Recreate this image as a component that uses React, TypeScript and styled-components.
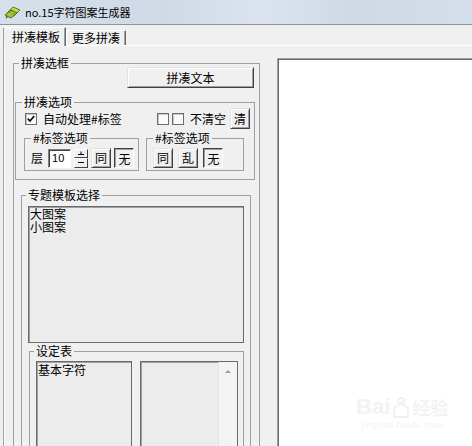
import React from "react";
import styled, { createGlobalStyle } from "styled-components";

const GlobalStyle = createGlobalStyle`
  html, body {
    margin: 0;
    padding: 0;
    background: #f0f0f0;
  }
  body {
    font-family: "Noto Sans CJK SC", "Liberation Sans", sans-serif;
    font-size: 12px;
    color: #000;
  }
`;

const Window = styled.div`
  width: 472px;
  height: 446px;
  overflow: hidden;
  display: flex;
  flex-direction: column;
  background: #f0f0f0;
`;

const TitleBar = styled.div`
  height: 24px;
  flex-shrink: 0;
  display: flex;
  align-items: center;
  gap: 4px;
  padding-left: 4px;
  background: linear-gradient(
    to right,
    #d6e0eb 0%,
    #cfdae6 35%,
    #dbe4ee 55%,
    #cfd9e5 75%,
    #d5dfea 100%
  );
  border-bottom: 1px solid #8d949c;
`;

const Title = styled.span`
  font-size: 11px;
  line-height: 14px;
  color: #000;
`;

const TabStrip = styled.div`
  height: 20px;
  flex-shrink: 0;
  display: flex;
  align-items: flex-end;
  padding-left: 3px;
`;

const Tab = styled.div<{ $active?: boolean }>`
  box-sizing: border-box;
  position: relative;
  z-index: 1;
  display: flex;
  align-items: center;
  font-size: 12px;
  line-height: 12px;
  background: #f0f0f0;
  border-top: 1px solid #fff;
  border-left: 1px solid ${(p) => (p.$active ? "#a0a0a0" : "#fff")};
  border-right: 1px solid #696969;
  box-shadow: inset -1px 0 0 #a0a0a0;
  height: ${(p) => (p.$active ? 19 : 15)}px;
  padding: ${(p) => (p.$active ? "0 5px 1px 8px" : "0 5px 0 5px")};
  margin-bottom: ${(p) => (p.$active ? -1 : 0)}px;
`;

const TabPage = styled.div`
  flex: 1;
  display: flex;
  margin-left: 3px;
  border-top: 1px solid #fff;
  border-left: 1px solid #a0a0a0;
  box-shadow: inset 1px 0 0 #fff;
  min-height: 0;
`;

const LeftPanel = styled.div`
  width: 256px;
  flex-shrink: 0;
  box-sizing: border-box;
  padding: 11px 0 0 9px;
`;

const Group = styled.fieldset<{ $pad: string; $m?: string; $w?: number; $h?: number }>`
  box-sizing: border-box;
  margin: ${(p) => p.$m ?? "0"};
  padding: ${(p) => p.$pad};
  border: 1px solid #a0a0a0;
  min-width: 0;
  ${(p) => (p.$w ? `width: ${p.$w}px; flex-shrink: 0;` : "")}
  ${(p) => (p.$h ? `height: ${p.$h}px;` : "")}
`;

const Legend = styled.legend<{ $indent: number }>`
  margin-left: ${(p) => p.$indent}px;
  padding: 0 2px;
  font-size: 12px;
  line-height: 12px;
  height: 12px;
  white-space: nowrap;
`;

const ButtonRow = styled.div`
  display: flex;
  justify-content: flex-end;
  margin-top: -2px;
`;

const Button = styled.button<{ $w: number; $h: number; $pressed?: boolean; $mr?: number }>`
  box-sizing: border-box;
  width: ${(p) => p.$w}px;
  height: ${(p) => p.$h}px;
  margin: 0 ${(p) => p.$mr ?? 0}px 0 0;
  padding: ${(p) => (p.$pressed ? "1px 0 0 1px" : "0")};
  flex-shrink: 0;
  display: flex;
  align-items: center;
  justify-content: center;
  font-family: "Noto Sans CJK SC", "Liberation Sans", sans-serif;
  font-size: 12px;
  line-height: 12px;
  color: #000;
  background: #f0f0f0;
  border: 1px solid;
  border-color: ${(p) =>
    p.$pressed ? "#404040 #fff #fff #404040" : "#e3e3e3 #404040 #404040 #e3e3e3"};
  box-shadow: ${(p) =>
    p.$pressed ? "inset 1px 1px 0 #a0a0a0" : "inset 1px 1px 0 #fff, inset -1px -1px 0 #a0a0a0"};
`;

const OptionRow = styled.div`
  height: 21px;
  display: flex;
  align-items: center;
`;

const RightOptions = styled.div`
  margin-left: auto;
  display: flex;
  align-items: center;
`;

const CheckBox = styled.span<{ $ml?: number }>`
  box-sizing: border-box;
  width: 12px;
  height: 12px;
  margin-left: ${(p) => p.$ml ?? 0}px;
  flex-shrink: 0;
  display: flex;
  align-items: center;
  justify-content: center;
  background: #fafafa;
  border: 1px solid #6c6c6c;
  box-shadow: inset 1px 1px 0 #c8c8c8;
`;

const Text = styled.span<{ $ml?: number; $mr?: number }>`
  margin-left: ${(p) => p.$ml ?? 0}px;
  margin-right: ${(p) => p.$mr ?? 0}px;
  font-size: 12px;
  line-height: 12px;
  white-space: nowrap;
`;

const SubRow = styled.div`
  display: flex;
  gap: 7px;
  margin-top: 3px;
`;

const ControlRow = styled.div<{ $gap: number }>`
  height: 20px;
  display: flex;
  align-items: center;
  gap: ${(p) => p.$gap}px;
`;

const NumberField = styled.div`
  box-sizing: border-box;
  width: 23px;
  height: 19px;
  flex-shrink: 0;
  padding: 2px 0 0 3px;
  font-family: "Liberation Sans", sans-serif;
  font-size: 11px;
  line-height: 13px;
  background: #fff;
  border: 1px solid;
  border-color: #808080 #fff #fff #808080;
  box-shadow: inset 1px 1px 0 #404040;
`;

const Spinner = styled.div`
  width: 14px;
  height: 19px;
  flex-shrink: 0;
  display: flex;
  flex-direction: column;
`;

const SpinHalf = styled.div`
  box-sizing: border-box;
  flex: 1;
  display: flex;
  align-items: center;
  justify-content: center;
  background: #f0f0f0;
  border: 1px solid;
  border-color: #fff #404040 #404040 #fff;
`;

const ListBox = styled.div<{ $h: number; $w?: number }>`
  box-sizing: border-box;
  height: ${(p) => p.$h}px;
  ${(p) => (p.$w ? `width: ${p.$w}px; flex-shrink: 0;` : "flex: 1;")}
  display: flex;
  background: #ececec;
  border: 1px solid #6a6a6a;
  box-shadow: inset 1px 1px 0 #a0a0a0;
  overflow: hidden;
`;

const ListItems = styled.div<{ $pt?: number }>`
  flex: 1;
  padding: ${(p) => p.$pt ?? 0}px 1px 0;
  display: flex;
  flex-direction: column;
`;

const ListItem = styled.div`
  height: 13px;
  font-size: 12px;
  line-height: 13px;
  white-space: nowrap;
`;

const ListPair = styled.div`
  display: flex;
  gap: 8px;
`;

const ScrollTrack = styled.div`
  width: 18px;
  flex-shrink: 0;
  display: flex;
  justify-content: center;
  padding-top: 8px;
  background: #f3f3f3;
  border-left: 1px solid #e4e4e4;
`;

const UpArrow = styled.span`
  width: 0;
  height: 0;
  border-left: 3px solid transparent;
  border-right: 3px solid transparent;
  border-bottom: 3px solid #9c9c9c;
`;

const TextPane = styled.div`
  position: relative;
  flex: 1;
  margin: 12px 0 0 17px;
  background: #fff;
  border-top: 1px solid #a0a0a0;
  border-left: 1px solid #a0a0a0;
  box-shadow: inset 1px 1px 0 #696969;
`;

const Watermark = styled.div`
  position: absolute;
  left: 78px;
  top: 336px;
  display: flex;
  flex-direction: column;
  align-items: center;
  color: #f3f3f3;
  font-family: "Liberation Sans", sans-serif;
`;

const WatermarkLogo = styled.div`
  display: flex;
  align-items: flex-end;
  gap: 2px;
  font-size: 22px;
  font-weight: bold;
  line-height: 24px;
`;

const WatermarkCjk = styled.span`
  font-family: "Noto Sans CJK SC", sans-serif;
  font-size: 18px;
`;

const WatermarkUrl = styled.div`
  font-size: 9px;
  line-height: 12px;
  letter-spacing: 0.5px;
`;

const AppIcon = () => (
  <svg width="17" height="17" viewBox="0 0 17 17">
    <path d="M2 14 L5 10" stroke="#7a5a2a" strokeWidth="1.6" fill="none" />
    <path d="M3 9 L9 3 L16 6 L10 12 Z" fill="#c2d94a" stroke="#5d7a1f" strokeWidth="1" />
    <path d="M1 11 L7 6 L13 9 L7 14 Z" fill="#a9c93a" stroke="#4f6b18" strokeWidth="1" />
    <path d="M5 9 L9 7 M7 11 L11 9" stroke="#6f8f25" strokeWidth="0.8" />
  </svg>
);

const CheckMark = () => (
  <svg width="8" height="8" viewBox="0 0 8 8">
    <path d="M0.8 3.6 L3 6 L7.2 1" stroke="#000" strokeWidth="1.6" fill="none" />
  </svg>
);

const SpinUp = () => (
  <svg width="6" height="4" viewBox="0 0 6 4">
    <path d="M0 3.5 H6 M3 0.5 V3.5" stroke="#000" strokeWidth="1" />
  </svg>
);

const SpinDown = () => (
  <svg width="6" height="3" viewBox="0 0 6 3">
    <path d="M0 1.5 H6" stroke="#000" strokeWidth="1" />
  </svg>
);

const PawIcon = () => (
  <svg width="18" height="22" viewBox="0 0 18 22">
    <circle cx="9" cy="4" r="3" fill="none" stroke="#f1f1f1" strokeWidth="2" />
    <path d="M2 20 L2 11 L9 6 L16 11 L16 20 Z" fill="none" stroke="#f1f1f1" strokeWidth="2" />
  </svg>
);

const App: React.FC = () => {
  return (
    <Window>
      <GlobalStyle />
      <TitleBar>
        <AppIcon />
        <Title>no.15字符图案生成器</Title>
      </TitleBar>
      <TabStrip>
        <Tab $active>拼凑模板</Tab>
        <Tab>更多拼凑</Tab>
      </TabStrip>
      <TabPage>
        <LeftPanel>
          <Group $pad="0 4px 0 1px" $w={247} $h={400}>
            <Legend $indent={4}>拼凑选框</Legend>
            <ButtonRow>
              <Button $w={127} $h={21} $mr={1}>
                拼凑文本
              </Button>
            </ButtonRow>

            <Group $pad="0 4px 8px 8px" $m="8px 0 0 0">
              <Legend $indent={-2}>拼凑选项</Legend>
              <OptionRow>
                <CheckBox $ml={1}>
                  <CheckMark />
                </CheckBox>
                <Text $ml={6}>自动处理#标签</Text>
                <RightOptions>
                  <CheckBox />
                  <CheckBox $ml={3} />
                  <Text $ml={6} $mr={4}>
                    不清空
                  </Text>
                  <Button $w={20} $h={21}>
                    清
                  </Button>
                </RightOptions>
              </OptionRow>
              <SubRow>
                <Group $pad="4px 0 2px 6px" $w={115}>
                  <Legend $indent={0}>#标签选项</Legend>
                  <ControlRow $gap={3}>
                    <Text $mr={2}>层</Text>
                    <NumberField>10</NumberField>
                    <Spinner>
                      <SpinHalf>
                        <SpinUp />
                      </SpinHalf>
                      <SpinHalf>
                        <SpinDown />
                      </SpinHalf>
                    </Spinner>
                    <Button $w={20} $h={20}>
                      同
                    </Button>
                    <Button $w={20} $h={20} $pressed>
                      无
                    </Button>
                  </ControlRow>
                </Group>
                <Group $pad="4px 0 2px 6px" $w={98}>
                  <Legend $indent={0}>#标签选项</Legend>
                  <ControlRow $gap={5}>
                    <Button $w={20} $h={20}>
                      同
                    </Button>
                    <Button $w={20} $h={20}>
                      乱
                    </Button>
                    <Button $w={20} $h={20} $pressed>
                      无
                    </Button>
                  </ControlRow>
                </Group>
              </SubRow>
            </Group>

            <Group $pad="5px 6px 0 6px" $m="9px 4px 0 6px" $h={260}>
              <Legend $indent={-2}>专题模板选择</Legend>
              <ListBox $h={137}>
                <ListItems>
                  <ListItem>大图案</ListItem>
                  <ListItem>小图案</ListItem>
                </ListItems>
              </ListBox>
              <Group $pad="4px 5px 0 6px" $m="2px 0 0 1px" $h={120}>
                <Legend $indent={-2}>设定表</Legend>
                <ListPair>
                  <ListBox $h={100} $w={96}>
                    <ListItems $pt={1}>
                      <ListItem>基本字符</ListItem>
                    </ListItems>
                  </ListBox>
                  <ListBox $h={100}>
                    <ListItems />
                    <ScrollTrack>
                      <UpArrow />
                    </ScrollTrack>
                  </ListBox>
                </ListPair>
              </Group>
            </Group>
          </Group>
        </LeftPanel>
        <TextPane>
          <Watermark>
            <WatermarkLogo>
              <span>Bai</span>
              <PawIcon />
              <WatermarkCjk>经验</WatermarkCjk>
            </WatermarkLogo>
            <WatermarkUrl>jingyan.baidu.com</WatermarkUrl>
          </Watermark>
        </TextPane>
      </TabPage>
    </Window>
  );
};

export default App;
